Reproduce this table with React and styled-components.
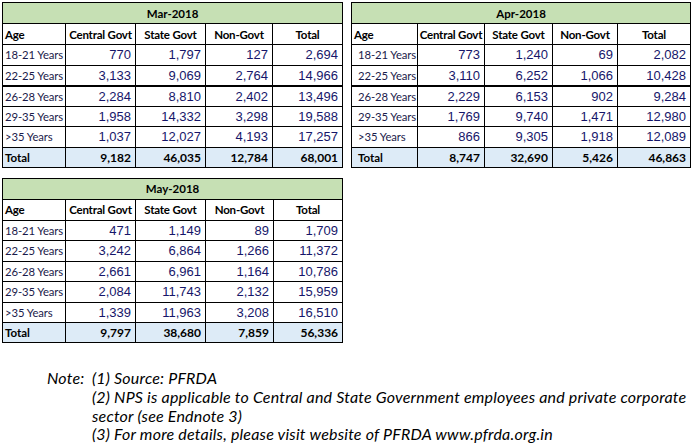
import React from "react";
import styled, { createGlobalStyle } from "styled-components";

const GlobalStyle = createGlobalStyle`
  html, body { margin: 0; padding: 0; background: #ffffff; }
  body { font-family: Lato, "Open Sans", "Liberation Sans", sans-serif; color: #000; }
`;

const Page = styled.div`
  width: 694px;
  height: 448px;
  padding: 2px 0 0 2px;
  box-sizing: border-box;
  overflow: hidden;
`;

const TablesGrid = styled.div`
  display: grid;
  grid-template-columns: 340px 339px;
  column-gap: 9px;
  row-gap: 10px;
  align-items: start;
`;

const Table = styled.table`
  border-collapse: collapse;
  table-layout: fixed;
  width: ${(p) => p.$width}px;
  border: 1px solid #000;
`;

const TitleCell = styled.th`
  background: #c6e0b4;
  height: 20px;
  padding: 0;
  font-size: 11.5px;
  font-weight: 700;
  text-align: center;
  border-bottom: 1px solid #000;
`;

const HeadCell = styled.th`
  height: 20px;
  padding: 0 ${(p) => (p.$left ? "2px" : "0")};
  font-size: 11.5px;
  font-weight: 700;
  text-align: ${(p) => (p.$left ? "left" : "center")};
  border: 1px solid #000;
  white-space: nowrap;
  overflow: hidden;
  letter-spacing: -0.2px;
`;

const Row = styled.tr`
  height: 20.5px;
  & > td {
    border-bottom: ${(p) => (p.$thick ? "2px" : "1px")} solid #000;
  }
`;

const TotalRow = styled.tr`
  height: 20px;
  background: #ddebf7;
`;

const AgeCell = styled.td`
  padding: 0 0 0 ${(p) => (p.$indent ? "6px" : "2px")};
  font-size: 11.3px;
  color: #1a1a4a;
  border-left: 1px solid #000;
  border-right: 1px solid #000;
  white-space: nowrap;
  overflow: hidden;
  text-overflow: clip;
  letter-spacing: -0.1px;
`;

const NumCell = styled.td`
  padding: 0 4px 0 0;
  text-align: right;
  font-family: "Liberation Sans", Arial, sans-serif;
  font-size: 13px;
  color: #16166a;
  border-left: 1px solid #000;
  border-right: 1px solid #000;
  white-space: nowrap;
`;

const TotalLabel = styled.td`
  padding: 0 0 0 ${(p) => (p.$indent ? "6px" : "2px")};
  font-size: 11.5px;
  font-weight: 700;
  border: 1px solid #000;
`;

const TotalNum = styled.td`
  padding: 0 4px 0 0;
  text-align: right;
  font-size: 12px;
  font-weight: 700;
  border: 1px solid #000;
`;

const Notes = styled.div`
  margin-top: 26px;
  padding-left: 45px;
  display: grid;
  grid-template-columns: 45px auto;
  font-family: Lato, "Open Sans", sans-serif;
  font-style: italic;
  font-size: 16px;
  line-height: 18.8px;
  letter-spacing: 0.2px;
  color: #000;
`;

const NoteLabel = styled.span``;

const NoteList = styled.div`
  display: flex;
  flex-direction: column;
`;

const NoteLine = styled.span`
  white-space: nowrap;
`;

const tables = [
  {
    title: "Mar-2018",
    width: 340,
    cols: [63, 70, 70, 67, 70],
    indent: false,
    rows: [
      ["18-21 Years", "770", "1,797", "127", "2,694"],
      ["22-25 Years", "3,133", "9,069", "2,764", "14,966"],
      ["26-28 Years", "2,284", "8,810", "2,402", "13,496"],
      ["29-35 Years", "1,958", "14,332", "3,298", "19,588"],
      [">35 Years", "1,037", "12,027", "4,193", "17,257"],
    ],
    total: ["9,182", "46,035", "12,784", "68,001"],
    thick: true,
  },
  {
    title: "Apr-2018",
    width: 339,
    cols: [66, 67, 68, 65, 73],
    indent: true,
    rows: [
      ["18-21 Years", "773", "1,240", "69", "2,082"],
      ["22-25 Years", "3,110", "6,252", "1,066", "10,428"],
      ["26-28 Years", "2,229", "6,153", "902", "9,284"],
      ["29-35 Years", "1,769", "9,740", "1,471", "12,980"],
      [">35 Years", "866", "9,305", "1,918", "12,089"],
    ],
    total: ["8,747", "32,690", "5,426", "46,863"],
    thick: true,
  },
  {
    title: "May-2018",
    width: 340,
    cols: [63, 70, 70, 68, 69],
    indent: false,
    rows: [
      ["18-21 Years", "471", "1,149", "89", "1,709"],
      ["22-25 Years", "3,242", "6,864", "1,266", "11,372"],
      ["26-28 Years", "2,661", "6,961", "1,164", "10,786"],
      ["29-35 Years", "2,084", "11,743", "2,132", "15,959"],
      [">35 Years", "1,339", "11,963", "3,208", "16,510"],
    ],
    total: ["9,797", "38,680", "7,859", "56,336"],
    thick: false,
  },
];

function MonthTable({ t }) {
  return (
    <Table $width={t.width}>
      <colgroup>
        {t.cols.map((w, i) => (
          <col key={i} style={{ width: w }} />
        ))}
      </colgroup>
      <thead>
        <tr>
          <TitleCell colSpan={5}>{t.title}</TitleCell>
        </tr>
        <tr>
          <HeadCell $left>Age</HeadCell>
          <HeadCell>Central Govt</HeadCell>
          <HeadCell>State Govt</HeadCell>
          <HeadCell>Non-Govt</HeadCell>
          <HeadCell>Total</HeadCell>
        </tr>
      </thead>
      <tbody>
        {t.rows.map((r, i) => (
          <Row key={i} $thick={i === 1 && t.thick}>
            <AgeCell $indent={t.indent}>{r[0]}</AgeCell>
            {r.slice(1).map((v, j) => (
              <NumCell key={j}>{v}</NumCell>
            ))}
          </Row>
        ))}
        <TotalRow>
          <TotalLabel $indent={t.indent}>Total</TotalLabel>
          {t.total.map((v, j) => (
            <TotalNum key={j}>{v}</TotalNum>
          ))}
        </TotalRow>
      </tbody>
    </Table>
  );
}

export default function App() {
  return (
    <Page>
      <GlobalStyle />
      <TablesGrid>
        {tables.map((t) => (
          <MonthTable key={t.title} t={t} />
        ))}
      </TablesGrid>
      <Notes>
        <NoteLabel>Note:</NoteLabel>
        <NoteList>
          <NoteLine>(1) Source: PFRDA</NoteLine>
          <NoteLine>
            (2) NPS is applicable to Central and State Government employees and private corporate
          </NoteLine>
          <NoteLine>sector (see Endnote 3)</NoteLine>
          <NoteLine>(3) For more details, please visit website of PFRDA www.pfrda.org.in</NoteLine>
        </NoteList>
      </Notes>
    </Page>
  );
}
